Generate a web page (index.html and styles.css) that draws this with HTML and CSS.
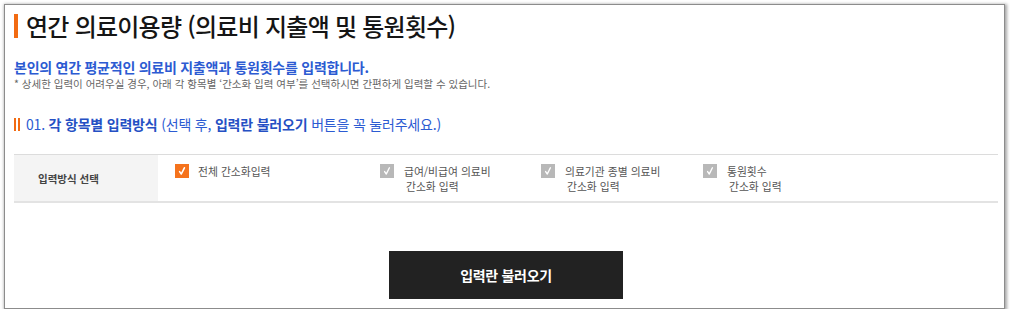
FILE: index.html
```html
<!DOCTYPE html>
<html lang="ko">
<head>
<meta charset="utf-8">
<title>연간 의료이용량</title>
<link rel="stylesheet" href="styles.css">
</head>
<body>
<div class="frame">
  <h1 class="title"><span class="bar"></span>연간 의료이용량 (의료비 지출액 및 통원횟수)</h1>
  <p class="lead">본인의 연간 평균적인 의료비 지출액과 통원횟수를 입력합니다.</p>
  <p class="note">* 상세한 입력이 어려우실 경우, 아래 각 항목별 ‘간소화 입력 여부’를 선택하시면 간편하게 입력할 수 있습니다.</p>
  <h2 class="sec"><span class="bars"><i></i><i></i></span>01. <b>각 항목별 입력방식</b> (선택 후, <b>입력란 불러오기</b> 버튼을 꼭 눌러주세요.)</h2>
  <div class="table">
    <div class="th">입력방식 선택</div>
    <div class="td options">
      <label class="opt on">
        <span class="box"><svg viewBox="0 0 14 14" width="14" height="14"><path d="M4.6 7.6 L6.3 10 L9.4 3.8" fill="none" stroke="#fff" stroke-width="1.6" stroke-linecap="round" stroke-linejoin="round"/></svg></span>
        <span class="txt">전체 간소화입력</span>
      </label>
      <label class="opt">
        <span class="box"><svg viewBox="0 0 14 14" width="14" height="14"><path d="M4.6 7.6 L6.3 10 L9.4 3.8" fill="none" stroke="#fff" stroke-width="1.4" stroke-linecap="round" stroke-linejoin="round"/></svg></span>
        <span class="txt">급여/비급여 의료비<span class="l2">간소화 입력</span></span>
      </label>
      <label class="opt">
        <span class="box"><svg viewBox="0 0 14 14" width="14" height="14"><path d="M4.6 7.6 L6.3 10 L9.4 3.8" fill="none" stroke="#fff" stroke-width="1.4" stroke-linecap="round" stroke-linejoin="round"/></svg></span>
        <span class="txt">의료기관 종별 의료비<span class="l2">간소화 입력</span></span>
      </label>
      <label class="opt">
        <span class="box"><svg viewBox="0 0 14 14" width="14" height="14"><path d="M4.6 7.6 L6.3 10 L9.4 3.8" fill="none" stroke="#fff" stroke-width="1.4" stroke-linecap="round" stroke-linejoin="round"/></svg></span>
        <span class="txt">통원횟수<span class="l2">간소화 입력</span></span>
      </label>
    </div>
  </div>
  <div class="actions"><button class="load" type="button">입력란 불러오기</button></div>
</div>
</body>
</html>
```

FILE: styles.css
```css
* { box-sizing: border-box; }
html, body { margin: 0; padding: 0; background: #fff; }
body { font-family: "Noto Sans CJK KR", "Noto Sans", sans-serif; color: #222; }

.frame {
  margin: 4px 0 0 4px;
  width: 1001px;
  height: 305px;
  border: 1px solid #8c8c8c;
  box-shadow: 1px 1px 3px 1px rgba(0,0,0,0.35);
  background: #fff;
  padding: 7px 6px 0 9px;
}

.title {
  margin: 0;
  display: flex;
  align-items: center;
  font-size: 24px;
  line-height: 28px;
  font-weight: 500;
  letter-spacing: -0.75px;
  color: #151515;
}
.title .bar {
  display: inline-block;
  width: 4px;
  height: 24px;
  background: #f26b12;
  margin-right: 8px;
}

.lead {
  margin: 18px 0 0;
  font-size: 14px;
  line-height: 18px;
  font-weight: 700;
  letter-spacing: -0.25px;
  color: #2c5bd2;
}
.note {
  margin: 1px 0 0;
  font-size: 10.5px;
  line-height: 14px;
  color: #666;
}

.sec {
  margin: 23px 0 0;
  display: flex;
  align-items: center;
  font-size: 14px;
  line-height: 20px;
  font-weight: 400;
  letter-spacing: -0.2px;
  color: #2c5bd2;
  white-space: pre;
}
.sec b { font-weight: 700; color: #2550c4; }
.sec .bars { display: inline-flex; gap: 2px; margin-right: 6px; }
.sec .bars i { display: block; width: 2px; height: 13px; background: #f26b12; }

.table {
  margin-top: 20px;
  display: flex;
  border-top: 1px solid #dcdcdc;
  border-bottom: 2px solid #e3e3e3;
  height: 49px;
}
.th {
  width: 144px;
  background: #f4f4f4;
  display: flex;
  align-items: center;
  padding-left: 24px;
  font-size: 10.5px;
  font-weight: 700;
  color: #444;
}
.options {
  flex: 1;
  display: grid;
  grid-template-columns: 205px 161px 162px auto;
  padding: 9px 0 0 17px;
}
.opt { display: flex; align-items: flex-start; }
.box {
  width: 14px; height: 14px;
  flex: none;
  background: #b8b8b8;
  display: block;
}
.box svg { display: block; }
.opt.on .box { background: #f5731c; }
.txt {
  margin-left: 10px;
  font-size: 10.8px;
  line-height: 15px;
  color: #555;
  display: flex;
  flex-direction: column;
}
.opt.on .txt { margin-left: 9px; }
.l2 { padding-left: 2px; }

.actions {
  display: flex;
  justify-content: center;
  margin-top: 48px;
}
.load {
  width: 234px;
  height: 48px;
  border: 0;
  background: #222;
  color: #fff;
  font-family: inherit;
  font-size: 14px;
  font-weight: 700;
  letter-spacing: -0.3px;
}
```
